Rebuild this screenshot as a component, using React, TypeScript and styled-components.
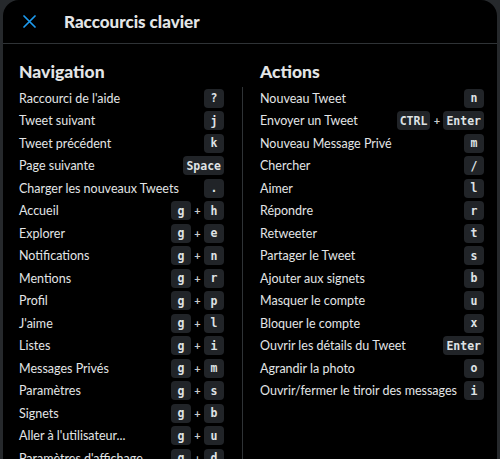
import React from "react";
import styled, { createGlobalStyle } from "styled-components";

const Global = createGlobalStyle`
  html, body { margin: 0; padding: 0; background: #26292c; overflow: hidden; }
  body { font-family: Lato, "Open Sans", sans-serif; }
`;

const Modal = styled.div`
  margin: 0 3px;
  height: 459px;
  background: #000;
  border-radius: 16px 16px 0 0;
  overflow: hidden;
  color: #e3e5e6;
`;

const Header = styled.header`
  height: 43px;
  border-bottom: 1px solid #2f3336;
  display: flex;
  align-items: center;
  padding-left: 19px;
`;

const CloseButton = styled.button`
  width: 14px;
  height: 14px;
  padding: 0;
  border: 0;
  background: none;
  display: flex;
  align-items: center;
  justify-content: center;
  margin-right: 28px;
  margin-top: -1px;
`;

const Title = styled.h1`
  margin: 0;
  font-size: 17px;
  font-weight: 900;
`;

const Body = styled.div`
  display: grid;
  grid-template-columns: 240px 254px;
`;

const Column = styled.section<{ $side: "left" | "right" }>`
  padding-left: ${(p) => (p.$side === "left" ? "16px" : "17px")};
  padding-right: ${(p) => (p.$side === "left" ? "0" : "13px")};
`;

const Heading = styled.h2`
  margin: 16px 0 0;
  font-size: 17.5px;
  line-height: 24px;
  font-weight: 900;
`;

const List = styled.ul<{ $divider?: boolean }>`
  list-style: none;
  margin: 3px 0 0;
  padding: 0 ${(p) => (p.$divider ? "18px" : "0")} 0 0;
  border-right: ${(p) => (p.$divider ? "1px solid #2f3336" : "none")};
`;

const Row = styled.li`
  height: 22.5px;
  display: flex;
  align-items: center;
  justify-content: space-between;
  font-size: 12.5px;
  white-space: nowrap;
`;

const Keys = styled.span`
  display: flex;
  align-items: center;
`;

const Key = styled.kbd`
  height: 19px;
  min-width: 20px;
  box-sizing: border-box;
  padding: 0 3px;
  display: inline-flex;
  align-items: center;
  justify-content: center;
  background: #212428;
  border-radius: 4px;
  font-family: "DejaVu Sans Mono", "Liberation Mono", monospace;
  font-size: 11.5px;
  font-weight: 700;
  color: #dfe2e4;
`;

const Plus = styled.span`
  width: 13px;
  text-align: center;
  font-size: 11px;
  font-weight: 700;
  color: #c9ccce;
`;

type Item = [string, string[]];

const nav: Item[] = [
  ["Raccourci de l'aide", ["?"]],
  ["Tweet suivant", ["j"]],
  ["Tweet précédent", ["k"]],
  ["Page suivante", ["Space"]],
  ["Charger les nouveaux Tweets", ["."]],
  ["Accueil", ["g", "h"]],
  ["Explorer", ["g", "e"]],
  ["Notifications", ["g", "n"]],
  ["Mentions", ["g", "r"]],
  ["Profil", ["g", "p"]],
  ["J'aime", ["g", "l"]],
  ["Listes", ["g", "i"]],
  ["Messages Privés", ["g", "m"]],
  ["Paramètres", ["g", "s"]],
  ["Signets", ["g", "b"]],
  ["Aller à l'utilisateur...", ["g", "u"]],
  ["Paramètres d'affichage", ["g", "d"]],
];

const actions: Item[] = [
  ["Nouveau Tweet", ["n"]],
  ["Envoyer un Tweet", ["CTRL", "Enter"]],
  ["Nouveau Message Privé", ["m"]],
  ["Chercher", ["/"]],
  ["Aimer", ["l"]],
  ["Répondre", ["r"]],
  ["Retweeter", ["t"]],
  ["Partager le Tweet", ["s"]],
  ["Ajouter aux signets", ["b"]],
  ["Masquer le compte", ["u"]],
  ["Bloquer le compte", ["x"]],
  ["Ouvrir les détails du Tweet", ["Enter"]],
  ["Agrandir la photo", ["o"]],
  ["Ouvrir/fermer le tiroir des messages", ["i"]],
];

const Shortcut = ({ item }: { item: Item }) => (
  <Row>
    <span>{item[0]}</span>
    <Keys>
      {item[1].map((k, i) => (
        <React.Fragment key={k + i}>
          {i > 0 && <Plus>+</Plus>}
          <Key>{k}</Key>
        </React.Fragment>
      ))}
    </Keys>
  </Row>
);

export default function App() {
  return (
    <>
      <Global />
      <Modal>
        <Header>
          <CloseButton aria-label="Fermer">
            <svg width="13" height="13" viewBox="0 0 13 13">
              <path d="M1 1 L12 12 M12 1 L1 12" stroke="#1d9bf0" strokeWidth="1.7" strokeLinecap="round" />
            </svg>
          </CloseButton>
          <Title>Raccourcis clavier</Title>
        </Header>
        <Body>
          <Column $side="left">
            <Heading>Navigation</Heading>
            <List $divider>
              {nav.map((it) => (
                <Shortcut key={it[0]} item={it} />
              ))}
            </List>
          </Column>
          <Column $side="right">
            <Heading>Actions</Heading>
            <List>
              {actions.map((it) => (
                <Shortcut key={it[0]} item={it} />
              ))}
            </List>
          </Column>
        </Body>
      </Modal>
    </>
  );
}
